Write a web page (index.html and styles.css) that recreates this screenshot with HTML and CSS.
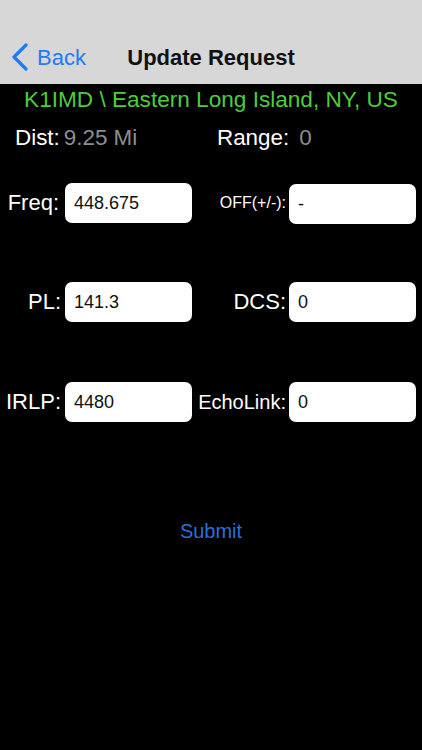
FILE: index.html
```html
<!DOCTYPE html>
<html>
<head>
<meta charset="utf-8">
<link rel="stylesheet" href="styles.css">
</head>
<body>
<header class="navbar">
  <div class="nav-row">
    <a class="back">
      <svg class="chev" width="18" height="28" viewBox="0 0 18 28"><path d="M15 2 L3 14 L15 26" fill="none" stroke="#1f7bf6" stroke-width="3.2" stroke-linecap="round" stroke-linejoin="round"/></svg>
      <span>Back</span>
    </a>
    <div class="title">Update Request</div>
    <div></div>
  </div>
</header>
<main class="content">
  <div class="repeater">K1IMD \ Eastern Long Island, NY, US</div>
  <div class="stats">
    <div class="stat first"><span class="lbl">Dist:</span><span class="val">9.25 Mi</span></div>
    <div class="stat"><span class="lbl">Range:</span><span class="val wide">0</span></div>
  </div>
  <div class="form">
    <div class="row r1">
      <label class="flabel freq">Freq:</label>
      <div class="input">448.675</div>
      <label class="flabel small">OFF(+/-):</label>
      <div class="input shift">-</div>
    </div>
    <div class="row r2">
      <label class="flabel">PL:</label>
      <div class="input">141.3</div>
      <label class="flabel">DCS:</label>
      <div class="input">0</div>
    </div>
    <div class="row r3">
      <label class="flabel">IRLP:</label>
      <div class="input">4480</div>
      <label class="flabel mid">EchoLink:</label>
      <div class="input">0</div>
    </div>
  </div>
  <div class="submit">Submit</div>
</main>
</body>
</html>
```
FILE: styles.css
```css
html, body {
  margin: 0;
  padding: 0;
  background: #000;
  font-family: "Liberation Sans", Arial, Helvetica, sans-serif;
}
body {
  width: 422px;
  height: 750px;
  overflow: hidden;
}
.navbar {
  background: #d7d7d7;
  height: 84px;
  box-sizing: border-box;
  padding-top: 43px;
}
.nav-row {
  display: grid;
  grid-template-columns: 1fr auto 1fr;
  align-items: center;
  height: 28px;
}
.back {
  display: flex;
  align-items: center;
  padding-left: 11px;
  color: #1f7bf6;
  font-size: 22px;
  line-height: 26px;
}
.chev {
  display: block;
  margin-right: 8px;
}
.back span {
  position: relative;
  top: 1px;
}
.title {
  font-weight: bold;
  font-size: 22px;
  line-height: 26px;
  color: #111;
  position: relative;
  top: 1px;
}
.repeater {
  margin-top: 3px;
  text-align: center;
  color: #4fcc3a;
  font-size: 22.6px;
  line-height: 26px;
  height: 26px;
}
.stats {
  display: flex;
  margin-top: 12px;
  font-size: 22.4px;
  line-height: 26px;
  color: #fff;
}
.stat.first {
  width: 202px;
  padding-left: 15px;
}
.val {
  color: #8e8e8e;
  margin-left: 4px;
}
.val.wide {
  margin-left: 10px;
}
.form {
  margin-top: 32px;
}
.row {
  display: grid;
  grid-template-columns: 65px 127px 97px 127px;
  align-items: center;
  height: 40px;
}
.r2 { margin-top: 59px; }
.r3 { margin-top: 60px; }
.flabel {
  color: #fff;
  font-size: 22px;
  line-height: 26px;
  text-align: right;
  padding-right: 4px;
  white-space: nowrap;
}
.flabel.freq {
  padding-right: 6px;
}
.row .flabel:nth-child(3) {
  padding-right: 3px;
}
.flabel.small {
  font-size: 16px;
}
.flabel.mid {
  font-size: 20px;
}
.input {
  background: #fff;
  border-radius: 7px;
  height: 40px;
  box-sizing: border-box;
  padding-left: 9px;
  font-size: 18px;
  line-height: 40px;
  color: #111;
}
.input.shift {
  position: relative;
  top: 1px;
}
.submit {
  margin-top: 97px;
  text-align: center;
  color: #2d6fd8;
  font-size: 20px;
  line-height: 24px;
}
```
